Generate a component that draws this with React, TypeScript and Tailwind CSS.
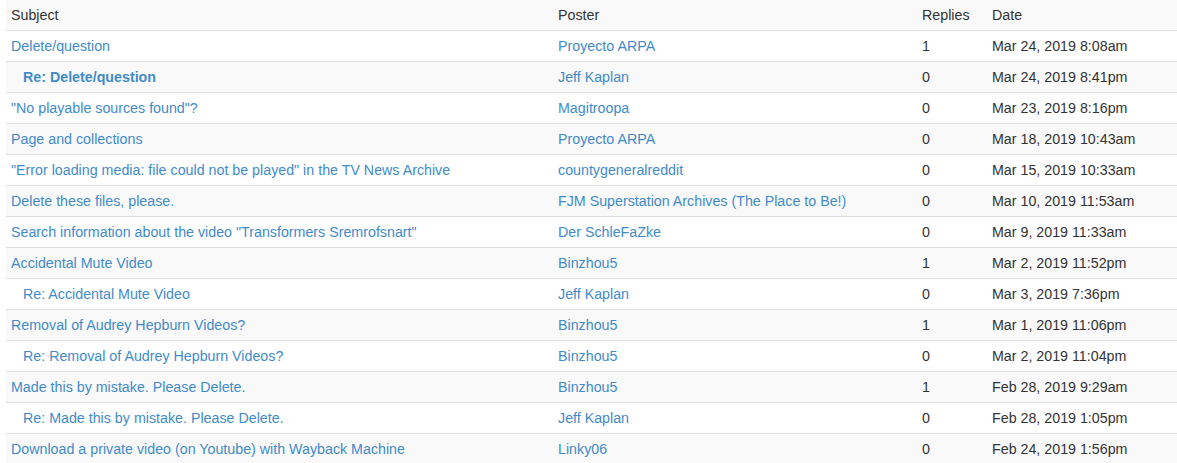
import React from "react";

type Row = {
  subject: string;
  poster: string;
  replies: number;
  date: string;
  reply?: boolean;
  current?: boolean;
};

const rows: Row[] = [
  { subject: "Delete/question", poster: "Proyecto ARPA", replies: 1, date: "Mar 24, 2019 8:08am" },
  { subject: "Re: Delete/question", poster: "Jeff Kaplan", replies: 0, date: "Mar 24, 2019 8:41pm", reply: true, current: true },
  { subject: "\"No playable sources found\"?", poster: "Magitroopa", replies: 0, date: "Mar 23, 2019 8:16pm" },
  { subject: "Page and collections", poster: "Proyecto ARPA", replies: 0, date: "Mar 18, 2019 10:43am" },
  { subject: "\"Error loading media: file could not be played\" in the TV News Archive", poster: "countygeneralreddit", replies: 0, date: "Mar 15, 2019 10:33am" },
  { subject: "Delete these files, please.", poster: "FJM Superstation Archives (The Place to Be!)", replies: 0, date: "Mar 10, 2019 11:53am" },
  { subject: "Search information about the video \"Transformers Sremrofsnart\"", poster: "Der SchleFaZke", replies: 0, date: "Mar 9, 2019 11:33am" },
  { subject: "Accidental Mute Video", poster: "Binzhou5", replies: 1, date: "Mar 2, 2019 11:52pm" },
  { subject: "Re: Accidental Mute Video", poster: "Jeff Kaplan", replies: 0, date: "Mar 3, 2019 7:36pm", reply: true },
  { subject: "Removal of Audrey Hepburn Videos?", poster: "Binzhou5", replies: 1, date: "Mar 1, 2019 11:06pm" },
  { subject: "Re: Removal of Audrey Hepburn Videos?", poster: "Binzhou5", replies: 0, date: "Mar 2, 2019 11:04pm", reply: true },
  { subject: "Made this by mistake. Please Delete.", poster: "Binzhou5", replies: 1, date: "Feb 28, 2019 9:29am" },
  { subject: "Re: Made this by mistake. Please Delete.", poster: "Jeff Kaplan", replies: 0, date: "Feb 28, 2019 1:05pm", reply: true },
  { subject: "Download a private video (on Youtube) with Wayback Machine", poster: "Linky06", replies: 0, date: "Feb 24, 2019 1:56pm" },
];

export default function App() {
  return (
    <div className="bg-white pl-[6px] font-['Liberation_Sans',Arial,sans-serif] text-[14.25px] leading-5 text-[#333]">
      <table className="w-full table-fixed border-collapse">
        <colgroup>
          <col className="w-[547px]" />
          <col className="w-[364px]" />
          <col className="w-[70px]" />
          <col />
        </colgroup>
        <tbody>
          <tr className="bg-[#f9f9f9]">
            <td className="p-[5px] text-left font-normal">Subject</td>
            <td className="p-[5px] text-left font-normal">Poster</td>
            <td className="p-[5px] text-left font-normal">Replies</td>
            <td className="p-[5px] text-left font-normal">Date</td>
          </tr>
          {rows.map((r, i) => (
            <tr key={i} className={i % 2 === 1 ? "bg-[#f9f9f9]" : "bg-white"}>
              <td className="whitespace-nowrap border-t border-[#ddd] p-[5px]">
                <a
                  href="#"
                  className={`text-[#428bca] ${r.reply ? "pl-3" : ""} ${r.current ? "font-bold" : ""}`}
                >
                  {r.subject}
                </a>
              </td>
              <td className="whitespace-nowrap border-t border-[#ddd] p-[5px]">
                <a href="#" className="text-[#428bca]">
                  {r.poster}
                </a>
              </td>
              <td className="border-t border-[#ddd] p-[5px]">{r.replies}</td>
              <td className="whitespace-nowrap border-t border-[#ddd] p-[5px]">{r.date}</td>
            </tr>
          ))}
        </tbody>
      </table>
    </div>
  );
}
